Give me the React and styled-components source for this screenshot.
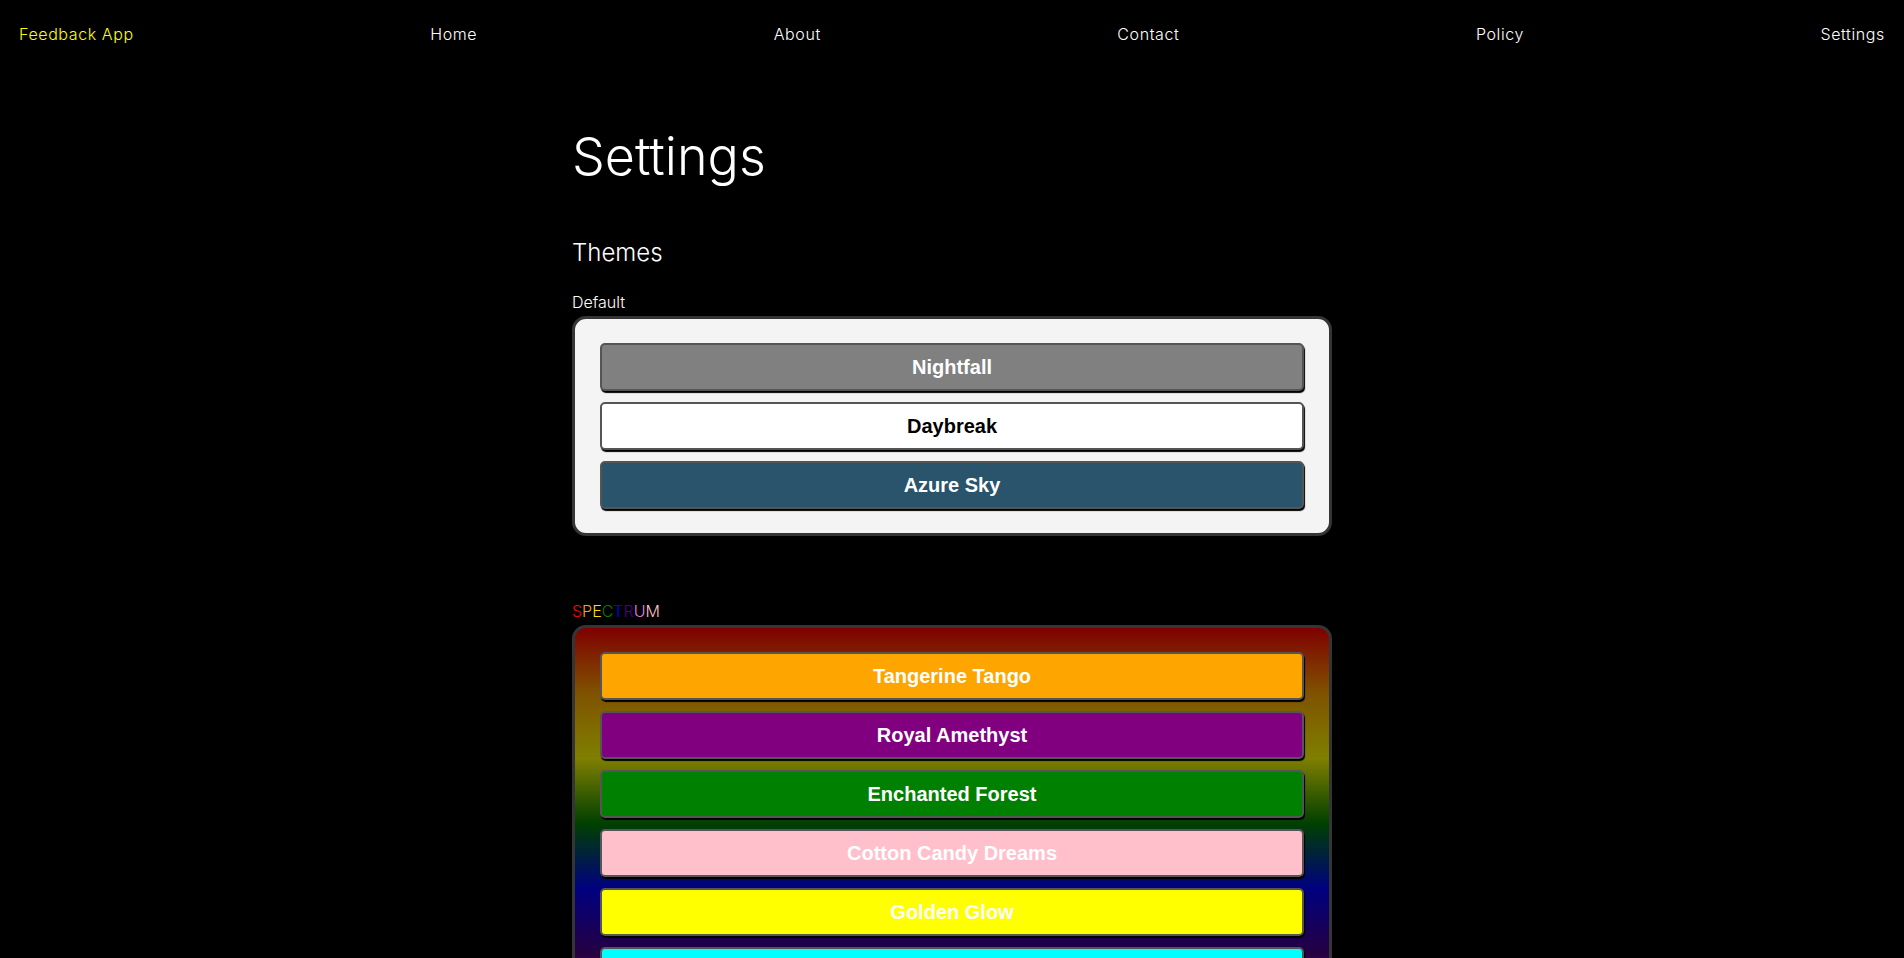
import styled, { createGlobalStyle } from "styled-components";

const GlobalStyle = createGlobalStyle`
  body {
    margin: 0;
    background-color: black;
    font-family: "Inter", "Lato", sans-serif;
    font-weight: 300;
    color: white;
  }
`;

const Nav = styled.nav`
  height: 68px;
  padding: 0 19px;
  display: flex;
  align-items: center;
  justify-content: space-between;
`;

const NavLink = styled.a`
  font-size: 16px;
  line-height: 20px;
  letter-spacing: 0.6px;
  color: ${(props) => (props.brand ? "#ffff00" : "white")};
  text-decoration: none;
  cursor: pointer;
`;

const Main = styled.main`
  width: 760px;
  margin: 0 auto;
  padding-top: 59px;
  padding-bottom: 40px;
`;

const Title = styled.h1`
  margin: 0 0 51px 0;
  font-size: 52px;
  line-height: 60px;
  font-weight: 300;
`;

const SubTitle = styled.h2`
  margin: 0 0 24px 0;
  font-size: 24px;
  line-height: 30px;
  font-weight: 300;
`;

const GroupLabel = styled.div`
  font-size: 16px;
  line-height: 20px;
  margin-bottom: 4px;
`;

const Letter = styled.span`
  color: ${(props) => props.color};
`;

const Panel = styled.div`
  display: flex;
  flex-direction: column;
  gap: 11px;
  padding: 24px 25px;
  border: 3px solid #353535;
  border-radius: 14px;
  background: ${(props) =>
    props.rainbow
      ? "linear-gradient(rgba(0,0,0,0.5), rgba(0,0,0,0.5)), linear-gradient(red, orange, yellow, green, blue, indigo, violet)"
      : "#f4f4f4"};
  margin-bottom: ${(props) => (props.rainbow ? "0" : "65px")};
`;

const ThemeButton = styled.button`
  height: 48px;
  width: 100%;
  border: 2px solid #555;
  border-radius: 5px;
  box-shadow: 1px 2px 1px #000;
  background-color: ${(props) => props.bg};
  color: ${(props) => props.fg || "white"};
  font-family: "Liberation Sans", Arial, sans-serif;
  font-weight: bold;
  font-size: 20px;
  cursor: pointer;
`;

const defaultThemes = [
  { name: "Nightfall", bg: "#808080" },
  { name: "Daybreak", bg: "#ffffff", fg: "#000000" },
  { name: "Azure Sky", bg: "#29546c" },
];

const spectrumThemes = [
  { name: "Tangerine Tango", bg: "#ffa500" },
  { name: "Royal Amethyst", bg: "#800080" },
  { name: "Enchanted Forest", bg: "#008000" },
  { name: "Cotton Candy Dreams", bg: "#ffc0cb" },
  { name: "Golden Glow", bg: "#ffff00" },
  { name: "Ocean Breeze", bg: "#00ffff" },
];

const spectrumLetters = [
  ["S", "#ff0000"],
  ["P", "#ffa500"],
  ["E", "#ffdf00"],
  ["C", "#008000"],
  ["T", "#0000ff"],
  ["R", "#4b0082"],
  ["U", "#ee82ee"],
  ["M", "#ffc0cb"],
];

const App = () => {
  return (
    <>
      <GlobalStyle />
      <Nav>
        <NavLink brand>Feedback App</NavLink>
        <NavLink>Home</NavLink>
        <NavLink>About</NavLink>
        <NavLink>Contact</NavLink>
        <NavLink>Policy</NavLink>
        <NavLink>Settings</NavLink>
      </Nav>
      <Main>
        <Title>Settings</Title>
        <SubTitle>Themes</SubTitle>
        <GroupLabel>Default</GroupLabel>
        <Panel>
          {defaultThemes.map((theme) => (
            <ThemeButton key={theme.name} bg={theme.bg} fg={theme.fg}>
              {theme.name}
            </ThemeButton>
          ))}
        </Panel>
        <GroupLabel>
          {spectrumLetters.map(([ch, color], i) => (
            <Letter key={i} color={color}>
              {ch}
            </Letter>
          ))}
        </GroupLabel>
        <Panel rainbow>
          {spectrumThemes.map((theme) => (
            <ThemeButton key={theme.name} bg={theme.bg}>
              {theme.name}
            </ThemeButton>
          ))}
        </Panel>
      </Main>
    </>
  );
};

export default App;
